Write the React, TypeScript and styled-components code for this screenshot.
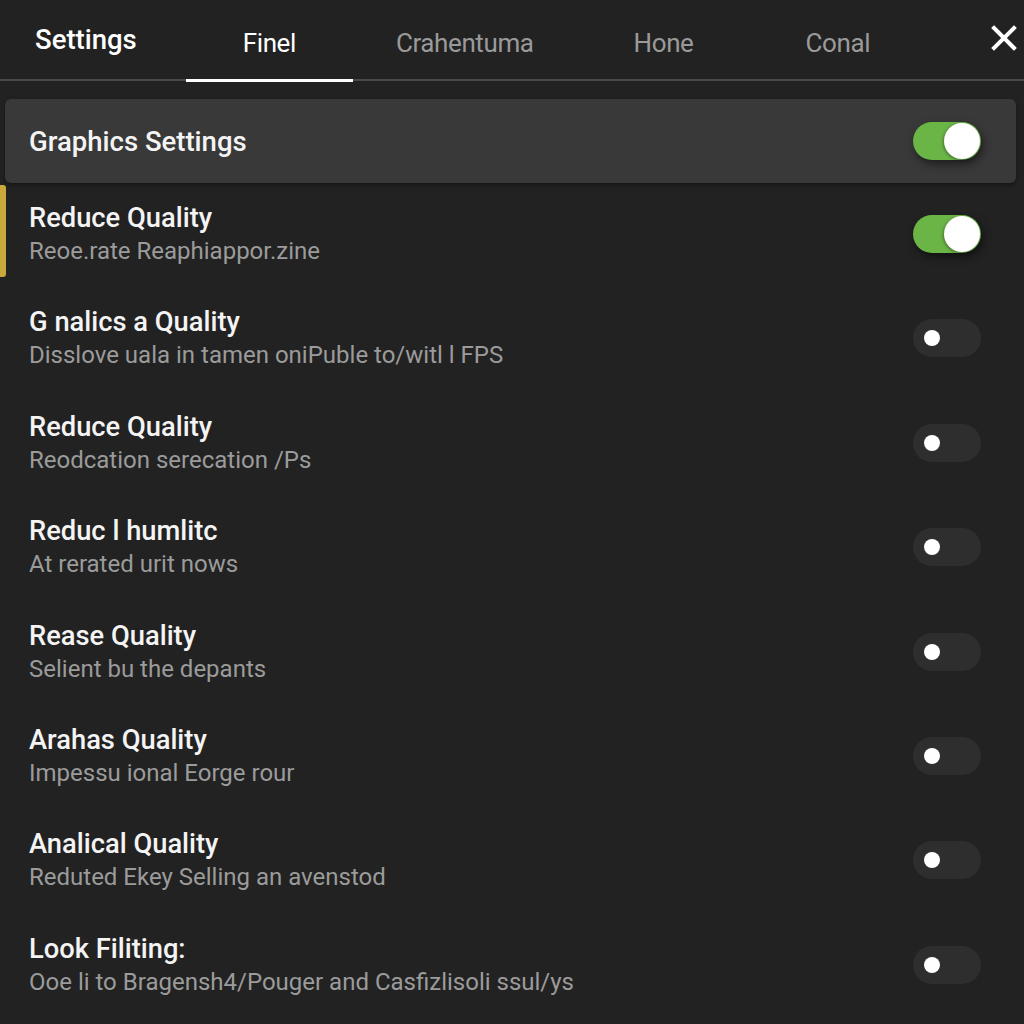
import React from "react";
import styled, { createGlobalStyle } from "styled-components";

const Global = createGlobalStyle`
  html, body { margin: 0; padding: 0; background: #222222; }
  body { font-family: Roboto, "Noto Sans", "Liberation Sans", sans-serif; color: #f2f2f2; }
  * { box-sizing: border-box; }
`;

const Page = styled.div`
  width: 1024px;
  height: 1024px;
  background: #222222;
  overflow: hidden;
  display: flex;
  flex-direction: column;
`;

const Header = styled.header`
  height: 81px;
  display: flex;
  align-items: stretch;
  border-bottom: 2px solid #4a4a4a;
`;

const Title = styled.h1`
  margin: 0;
  padding-left: 35px;
  font-size: 27.5px;
  font-weight: 500;
  color: #ffffff;
  display: flex;
  align-items: center;
  height: 80px;
  padding-bottom: 2px;
`;

const Tabs = styled.nav`
  display: flex;
  margin-left: 56px;
  height: 80px;
`;

const Tab = styled.div<{ $active?: boolean; $extra?: number }>`
  padding: 6px 50px 0;
  margin-left: ${(p) => p.$extra ?? 0}px;
  display: flex;
  align-items: center;
  font-size: 26px;
  font-weight: 400;
  letter-spacing: -0.4px;
  color: ${(p) => (p.$active ? "#ffffff" : "#9a9a9a")};
  position: relative;
  &::after {
    content: "";
    display: ${(p) => (p.$active ? "block" : "none")};
    position: absolute;
    left: -7px;
    right: -7px;
    bottom: -2px;
    height: 3px;
    background: #ffffff;
  }
`;

const Close = styled.div`
  margin-left: auto;
  width: 44px;
  display: flex;
  align-items: center;
  justify-content: center;
  padding-left: 4px;
  padding-bottom: 4px;
`;

const Content = styled.main`
  padding: 18px 8px 0 5px;
  display: flex;
  flex-direction: column;
`;

const Card = styled.section`
  height: 84px;
  background: #393939;
  border-radius: 6px;
  display: flex;
  align-items: center;
  padding: 0 35px 0 24px;
  box-shadow: 0 2px 4px rgba(0, 0, 0, 0.4);
`;

const CardTitle = styled.div`
  font-size: 27.5px;
  font-weight: 500;
  color: #f4f4f4;
  flex: 1;
`;

const List = styled.div`
  display: flex;
  flex-direction: column;
  margin-left: -5px;
  margin-top: 2px;
`;

const Row = styled.div<{ $accent?: boolean }>`
  height: 104.4px;
  flex: none;
  display: flex;
  align-items: flex-start;
  padding: 0 35px 0 29px;
  position: relative;
  &::before {
    content: "";
    display: ${(p) => (p.$accent ? "block" : "none")};
    position: absolute;
    left: 0;
    top: 0;
    width: 6px;
    height: 92px;
    background: #c9a93c;
    border-radius: 0 3px 3px 0;
  }
`;

const Texts = styled.div`
  flex: 1;
  display: flex;
  flex-direction: column;
  padding-top: 17px;
`;

const RowTitle = styled.div`
  font-size: 27.3px;
  font-weight: 500;
  color: #f4f4f4;
  line-height: 32px;
`;

const RowSub = styled.div`
  font-size: 24px;
  color: #9b9b9b;
  line-height: 32px;
  margin-top: 1px;
`;

const Switch = styled.div<{ $on?: boolean }>`
  width: 68px;
  height: 38px;
  margin-top: 30px;
  border-radius: 19px;
  background: ${(p) => (p.$on ? "#6bb446" : "#2e2e2e")};
  position: relative;
  flex: none;
  box-shadow: ${(p) => (p.$on ? "2px 4px 8px rgba(0,0,0,0.5)" : "none")};
`;

const CardSwitch = styled(Switch)`
  margin-top: 0;
`;

const Knob = styled.div<{ $on?: boolean }>`
  position: absolute;
  border-radius: 50%;
  background: #ffffff;
  ${(p) =>
    p.$on
      ? `width: 36px; height: 36px; top: 1px; right: 1px; box-shadow: -1px 1px 3px rgba(0,0,0,0.35);`
      : `width: 16px; height: 16px; top: 11px; left: 11px;`}
`;

const rows = [
  { t: "Reduce Quality", s: "Reoe.rate Reaphiappor.zine", on: true, accent: true },
  { t: "G nalics a Quality", s: "Disslove uala in tamen oniPuble to/witl l FPS" },
  { t: "Reduce Quality", s: "Reodcation serecation /Ps" },
  { t: "Reduc l humlitc", s: "At rerated urit nows" },
  { t: "Rease Quality", s: "Selient bu the depants" },
  { t: "Arahas Quality", s: "Impessu ional Eorge rour" },
  { t: "Analical Quality", s: "Reduted Ekey Selling an avenstod" },
  { t: "Look Filiting:", s: "Ooe li to Bragensh4/Pouger and Casfizlisoli ssul/ys" },
];

export default function App() {
  return (
    <Page>
      <Global />
      <Header>
        <Title>Settings</Title>
        <Tabs>
          <Tab $active>Finel</Tab>
          <Tab>Crahentuma</Tab>
          <Tab>Hone</Tab>
          <Tab $extra={12}>Conal</Tab>
        </Tabs>
        <Close>
          <svg width="26" height="26" viewBox="0 0 26 26">
            <path d="M3 3 L23 23 M23 3 L3 23" stroke="#ffffff" strokeWidth="4" strokeLinecap="square" />
          </svg>
        </Close>
      </Header>
      <Content>
        <Card>
          <CardTitle>Graphics Settings</CardTitle>
          <CardSwitch $on>
            <Knob $on />
          </CardSwitch>
        </Card>
        <List>
          {rows.map((r, i) => (
            <Row key={i} $accent={r.accent}>
              <Texts>
                <RowTitle>{r.t}</RowTitle>
                <RowSub>{r.s}</RowSub>
              </Texts>
              <Switch $on={r.on}>
                <Knob $on={r.on} />
              </Switch>
            </Row>
          ))}
        </List>
      </Content>
    </Page>
  );
}
